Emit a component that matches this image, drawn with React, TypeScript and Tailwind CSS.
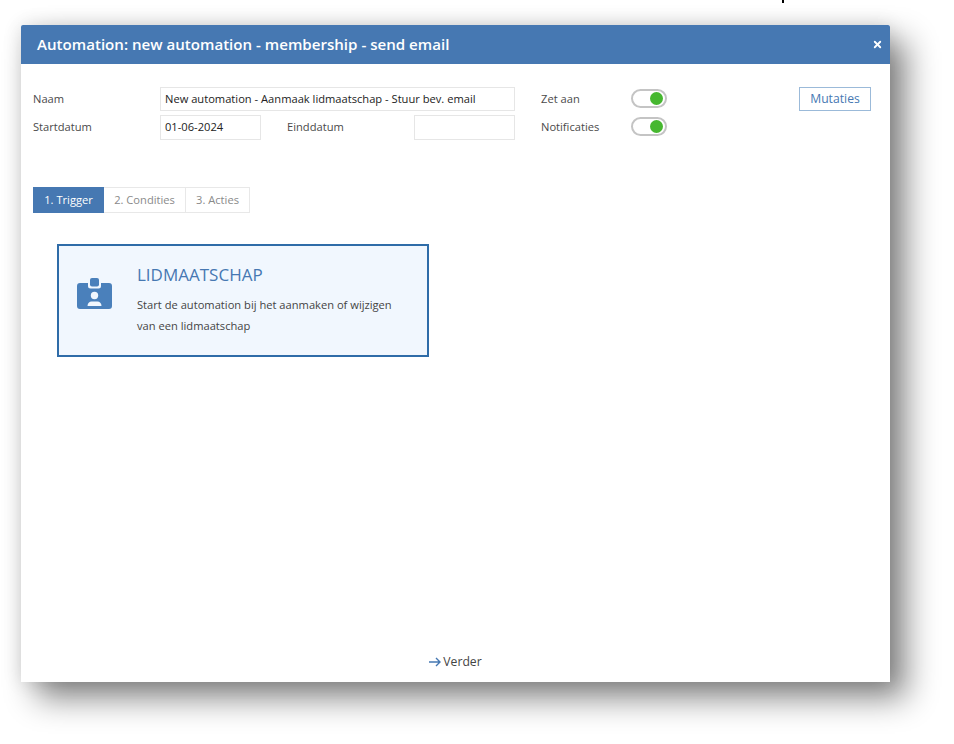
import { X } from "lucide-react";

function Toggle({ className }: { className: string }) {
  return (
    <div className={`flex h-[19px] w-9 items-center justify-end rounded-full border-2 border-[#c4c4c4] bg-white pr-[2px] ${className}`}>
      <div className="h-[13px] w-[13px] rounded-full bg-[#46b72f]" />
    </div>
  );
}

function Field({ value, className }: { value?: string; className: string }) {
  return (
    <div className={`flex items-center border border-[#e6e6e6] bg-white pl-1 text-[#222222] ${className}`}>
      {value}
    </div>
  );
}

export default function App() {
  return (
    <div className="relative h-[744px] w-[954px] overflow-hidden bg-white pl-[21px] pt-[25px] font-['Open_Sans',sans-serif] text-[11.15px] text-[#4a4a4a]">
      <div className="absolute left-[782px] top-0 h-[3px] w-[2px] bg-black" />
      <div className="flex h-[657px] w-[869px] flex-col bg-white shadow-[16px_16px_30px_rgba(0,0,0,0.48),0_0_18px_rgba(0,0,0,0.12)]">
        <div className="flex h-[39px] shrink-0 items-center justify-between rounded-t-[2px] bg-[#4678b2] pl-4 pr-[7px] text-[15.1px] font-semibold text-white">
          <span>Automation: new automation - membership - send email</span>
          <X size={11} strokeWidth={4} />
        </div>

        <div className="flex flex-1 flex-col pl-3 pt-[23px]">
          <div className="flex flex-col gap-1">
            <div className="flex items-center">
              <span className="w-[127px]">Naam</span>
              <Field value="New automation - Aanmaak lidmaatschap - Stuur bev. email" className="h-6 w-[355px]" />
              <span className="ml-[26px] w-[90px]">Zet aan</span>
              <Toggle className="mb-px" />
              <button className="ml-[132px] h-6 w-[72px] border border-[#9bbad9] text-[12.2px] text-[#4678b2]">Mutaties</button>
            </div>
            <div className="flex items-center">
              <span className="w-[127px]">Startdatum</span>
              <Field value="01-06-2024" className="h-[25px] w-[101px]" />
              <span className="ml-[26px] w-[127px]">Einddatum</span>
              <Field className="h-[25px] w-[101px]" />
              <span className="ml-[26px] w-[90px]">Notificaties</span>
              <Toggle className="mb-[2px]" />
            </div>
          </div>

          <div className="mt-[47px] flex h-[26px] w-[217px] border border-[#e8e8e8] text-[#8a8a8a]">
            <div className="-my-px -ml-px flex w-[71px] items-center justify-center bg-[#4678b2] text-white">1. Trigger</div>
            <div className="flex w-[82px] items-center justify-center border-r border-[#e8e8e8]">2. Condities</div>
            <div className="flex flex-1 items-center justify-center">3. Acties</div>
          </div>

          <div className="ml-6 mt-[31px] flex h-[113px] w-[372px] items-center border-2 border-[#2f6ca8] bg-[#f1f7fe]">
            <svg viewBox="0 0 35 32" className="mb-[14px] ml-[18px] h-8 w-[35px] shrink-0">
              <path
                fill="#4a80bb"
                d="M3 5h8v3a2.500 2.500 0 0 0 2.500 2.500h8A2.500 2.500 0 0 0 24 8V5h8a3 3 0 0 1 3 3v20a3 3 0 0 1-3 3H3a3 3 0 0 1-3-3V8a3 3 0 0 1 3-3Z"
              />
              <rect x="13" y="0" width="9" height="8.500" rx="2" fill="#4a80bb" />
              <circle cx="17.500" cy="17.500" r="3.700" fill="#f1f7fe" />
              <path fill="#f1f7fe" d="M10.500 28c0-3 2-4.500 4-4.500h6c2 0 4 1.500 4 4.500Z" />
            </svg>
            <div className="ml-[25px] flex flex-col">
              <h2 className="text-[17px] leading-5 text-[#4678b2]">LIDMAATSCHAP</h2>
              <p className="mt-[9px] w-[270px] leading-[21px] text-[#444444]">
                Start de automation bij het aanmaken of wijzigen van een lidmaatschap
              </p>
            </div>
          </div>

          <div className="mr-3 mt-auto mb-[11px] flex items-center justify-center gap-[2px] text-[12.2px] text-[#444444]">
            <svg viewBox="0 0 12 10" className="h-[10px] w-3 text-[#4678b2]" fill="none" stroke="currentColor" strokeWidth="1.400">
              <path d="M0 5h11M7 1l4 4-4 4" />
            </svg>
            <span>Verder</span>
          </div>
        </div>
      </div>
    </div>
  );
}
